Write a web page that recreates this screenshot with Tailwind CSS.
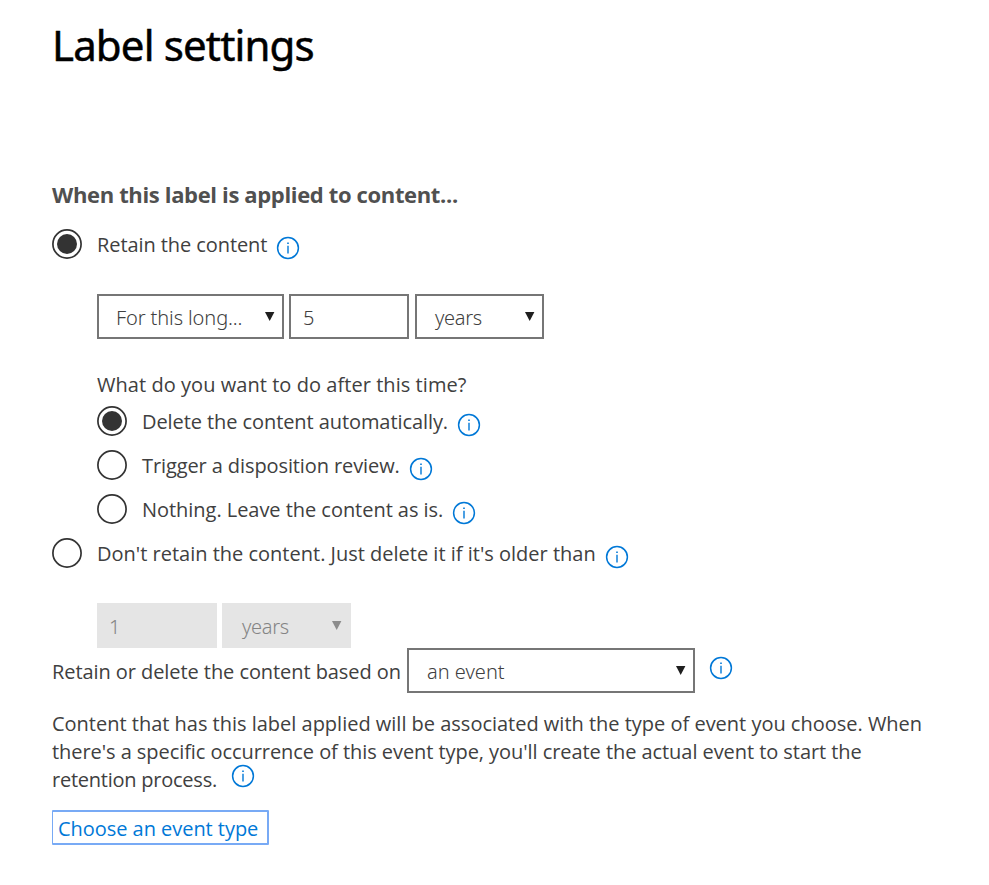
<!DOCTYPE html>
<html lang="en">
<head>
<meta charset="utf-8">
<title>Label settings</title>
<script src="https://cdn.jsdelivr.net/npm/@tailwindcss/browser@4"></script>
</head>
<body class="bg-white font-['Open_Sans','Noto_Sans',sans-serif] text-[20px] leading-7 text-[#404040]">
<svg class="hidden">
  <symbol id="info" viewBox="0 0 24 24">
    <circle cx="12" cy="12" r="10.4" fill="none" stroke="#0078d7" stroke-width="1.5"/>
    <path d="M11.2 6.4h1.6v1.7h-1.6zM11.3 9.7h1.4v7.7h-1.4z" fill="#0078d7"/>
  </symbol>
  <symbol id="on" viewBox="0 0 30 30">
    <circle cx="15" cy="15" r="14.1" fill="none" stroke="#333" stroke-width="1.7"/>
    <circle cx="15" cy="15" r="10" fill="#333"/>
  </symbol>
  <symbol id="off" viewBox="0 0 30 30">
    <circle cx="15" cy="15" r="14.1" fill="none" stroke="#333" stroke-width="1.7"/>
  </symbol>
  <symbol id="arrow" viewBox="0 0 10 9"><path d="M0 0h9.4L4.7 9z" fill="currentColor"/></symbol>
</svg>
<main class="flex flex-col items-start pl-[52px] whitespace-nowrap">
  <h1 class="mt-4 h-[58px] font-['Noto_Sans',sans-serif] text-[42px] leading-[58px] tracking-[-0.85px] text-black [-webkit-text-stroke:0.5px_black]">Label settings</h1>
  <h2 class="mt-[105px] h-[30px] text-[22px] leading-[30px] font-bold tracking-[-0.35px] text-[#505050]">When this label is applied to content...</h2>

  <div class="mt-[13px] flex h-11 items-center">
    <svg class="size-[30px]"><use href="#on"/></svg>
    <span class="ml-[15px] w-[179px] pt-0.5 tracking-[-0.08px]">Retain the content</span>
    <svg class="mt-2 size-6"><use href="#info"/></svg>
  </div>

  <div class="mt-7 ml-[45px] flex h-[45px] font-['Noto_Sans',sans-serif] font-light">
    <div class="flex w-[187px] items-center justify-between border-2 border-[#767676] pt-0.5 pr-[7px] pl-[17px]"><span class="tracking-[-0.1px]">For this long...</span><svg class="mb-0.5 h-[9px] w-[10px] text-[#1f1f1f]"><use href="#arrow"/></svg></div>
    <div class="ml-[5px] flex w-[120px] items-center border-2 border-[#767676] pt-0.5 pl-3">5</div>
    <div class="ml-[6px] flex w-[129px] items-center justify-between border-2 border-[#767676] pt-0.5 pr-[7px] pl-[18px]"><span class="tracking-[-0.3px]">years</span><svg class="mb-0.5 h-[9px] w-[10px] text-[#1f1f1f]"><use href="#arrow"/></svg></div>
  </div>

  <p class="mt-8 ml-[45px] h-7 tracking-[0.05px]">What do you want to do after this time?</p>
  <div class="ml-[45px] flex h-11 items-center">
    <svg class="size-[30px]"><use href="#on"/></svg>
    <span class="ml-[15px] w-[315px] pt-0.5 tracking-[-0.08px]">Delete the content automatically.</span>
    <svg class="mt-2 size-6"><use href="#info"/></svg>
  </div>
  <div class="ml-[45px] flex h-11 items-center">
    <svg class="size-[30px]"><use href="#off"/></svg>
    <span class="ml-[15px] w-[267px] pt-0.5 tracking-[-0.1px]">Trigger a disposition review.</span>
    <svg class="mt-2 size-6"><use href="#info"/></svg>
  </div>
  <div class="ml-[45px] flex h-11 items-center">
    <svg class="size-[30px]"><use href="#off"/></svg>
    <span class="ml-[15px] w-[310px] pt-0.5 tracking-[-0.04px]">Nothing. Leave the content as is.</span>
    <svg class="mt-2 size-6"><use href="#info"/></svg>
  </div>
  <div class="flex h-11 items-center">
    <svg class="size-[30px]"><use href="#off"/></svg>
    <span class="ml-[15px] w-[508px] pt-0.5">Don't retain the content. Just delete it if it's older than</span>
    <svg class="mt-2 size-6"><use href="#info"/></svg>
  </div>

  <div class="mt-7 ml-[45px] flex h-[45px] font-['Noto_Sans',sans-serif] font-light text-[#848484]">
    <div class="flex w-[120px] items-center bg-[#e5e5e5] pt-0.5 pl-3">1</div>
    <div class="ml-[5px] flex w-[129px] items-center justify-between bg-[#e5e5e5] pt-0.5 pr-[9px] pl-5"><span class="tracking-[-0.3px]">years</span><svg class="mb-0.5 h-[9px] w-[10px] text-[#8c8c8c]"><use href="#arrow"/></svg></div>
  </div>

  <div class="flex h-[45px]">
    <span class="w-[355px] pt-2.5 tracking-[-0.07px]">Retain or delete the content based on</span>
    <div class="flex w-[288px] items-center justify-between border-2 border-[#767676] pt-0.5 pr-[7px] pl-[18px] font-['Noto_Sans',sans-serif] font-light"><span>an event</span><svg class="mb-0.5 h-[9px] w-[10px] text-[#1f1f1f]"><use href="#arrow"/></svg></div>
    <svg class="mt-2 ml-[14px] size-6"><use href="#info"/></svg>
  </div>

  <p class="mt-[17px]"><span class="tracking-[-0.01px]">Content that has this label applied will be associated with the type of event you choose. When</span><br><span class="tracking-[-0.06px]">there's a specific occurrence of this event type, you'll create the actual event to start the</span></p>
  <div class="flex h-7"><span class="w-[179px] tracking-[-0.24px]">retention process.</span><svg class="-mt-[2px] size-6"><use href="#info"/></svg></div>

  <a class="mt-4 flex h-[35px] w-[217px] items-center rounded-[1px] border-2 border-l border-[#78aaf5] pt-[3px] pl-[5px] tracking-[-0.04px] text-[#0078d7]">Choose an event type</a>
</main>
</body>
</html>
